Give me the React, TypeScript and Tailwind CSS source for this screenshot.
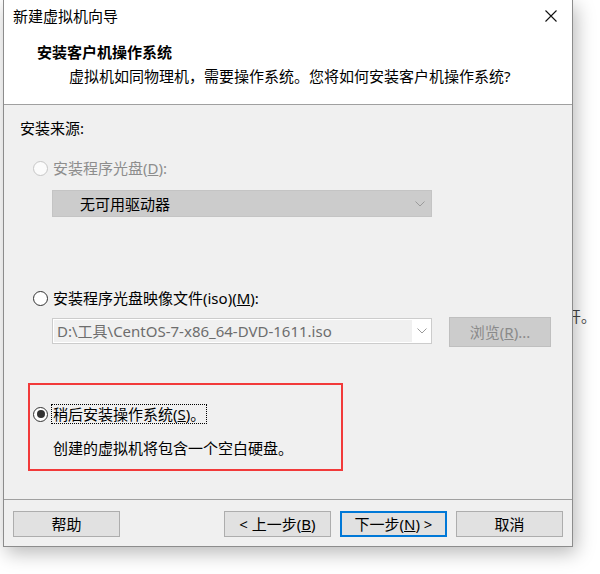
import React from "react";

const FONT = { fontFamily: '"Noto Sans", "Noto Sans CJK SC", sans-serif' };

function Radio({ state }: { state: "disabled" | "off" | "on" }) {
  if (state === "disabled") {
    return <div className="w-[15px] h-[15px] rounded-full border border-[#c6c6c6] bg-[#fbfbfb] shrink-0" />;
  }
  return (
    <div className="w-[15px] h-[15px] rounded-full border border-[#333333] bg-white shrink-0 flex items-center justify-center">
      {state === "on" && <div className="w-[8px] h-[8px] rounded-full bg-[#333333]" />}
    </div>
  );
}

function Chevron({ color = "#8a8a8a" }: { color?: string }) {
  return (
    <svg width="10" height="6" viewBox="0 0 10 6" fill="none">
      <polyline points="0.5,0.5 5,5 9.5,0.5" stroke={color} strokeWidth="1" />
    </svg>
  );
}

function Btn({ children, primary }: { children: React.ReactNode; primary?: boolean }) {
  return (
    <div
      className={`w-[107px] h-[26px] flex items-center justify-center bg-[#e1e1e1] text-[15px] leading-[20px] text-black ${
        primary ? "border-2 border-[#0078d7]" : "border border-[#adadad]"
      }`}
    >
      {children}
    </div>
  );
}

export default function App() {
  return (
    <div className="relative w-[600px] h-[574px] bg-white overflow-hidden" style={FONT}>
      {/* text of the window underneath */}
      <div className="absolute left-[566px] top-[306px] text-[15px] leading-[20px] text-[#444]">开。</div>

      <div className="pl-[3px]">
        <div className="relative z-10 w-[570px] h-[547px] flex flex-col bg-[#f0f0f0] border-x border-b border-[#8c8c8c] shadow-[3px_6px_18px_rgba(0,0,0,0.28)]">
          {/* Header */}
          <div className="h-[104px] bg-white pt-[6px] shrink-0">
            <div className="flex items-center justify-between h-[20px] pl-[9px] pr-[15px]">
              <span className="text-[15px] leading-[20px] text-black">新建虚拟机向导</span>
              <svg width="12" height="12" viewBox="0 0 12 12">
                <path d="M0.5 0.5 L11.5 11.5 M11.5 0.5 L0.5 11.5" stroke="#111" strokeWidth="1.1" />
              </svg>
            </div>
            <div className="mt-[16px] pl-[33px] text-[15px] leading-[20px] font-bold text-black">安装客户机操作系统</div>
            <div className="mt-[4px] pl-[65px] text-[15px] leading-[20px] text-black">
              虚拟机如同物理机，需要操作系统。您将如何安装客户机操作系统?
            </div>
          </div>
          <div className="h-px bg-[#a0a0a0] shrink-0" />

          {/* Content */}
          <div className="h-[394px] shrink-0 flex flex-col text-[15px] leading-[20px] text-black">
            <div className="mt-[13px] pl-[16px]">安装来源:</div>

            <div className="mt-[20px] pl-[29px] flex items-center gap-[5px] h-[20px]">
              <Radio state="disabled" />
              <span className="text-[#8d8d8d]">
                安装程序光盘(<span className="underline">D</span>):
              </span>
            </div>
            <div className="mt-[12px] ml-[48px] w-[380px] h-[27px] bg-[#cccccc] border border-[#c4c4c4] flex items-center justify-between pl-[27px] pr-[6px]">
              <span>无可用驱动器</span>
              <Chevron color="#9a9a9a" />
            </div>

            <div className="mt-[71px] pl-[29px] flex items-center gap-[5px] h-[20px]">
              <Radio state="off" />
              <span>
                安装程序光盘映像文件(iso)(<span className="underline">M</span>):
              </span>
            </div>
            <div className="mt-[9px] flex items-start">
              <div className="mt-[1px] ml-[48px] w-[380px] h-[26px] bg-white border border-[#cccccc] flex items-stretch">
                <div className="w-[358px] bg-[#f0f0f0] m-[1px] mr-0 flex items-center pl-[3px] text-[#6d6d6d]">
                  D:\工具\CentOS-7-x86_64-DVD-1611.iso
                </div>
                <div className="flex-1 flex items-center justify-center">
                  <Chevron color="#9a9a9a" />
                </div>
              </div>
              <div className="ml-[17px] w-[102px] h-[30px] bg-[#cccccc] border border-[#bfbfbf] flex items-center justify-center text-[#8a8a8a]">
                浏览(<span className="underline">R</span>)...
              </div>
            </div>

            <div className="mt-[36px] ml-[24px] w-[315px] h-[88px] border-2 border-[#f23a3a] pt-[19px]">
              <div className="flex items-center h-[20px] pl-[3px]">
                <Radio state="on" />
                <div className="ml-[3px] h-[20px] border border-dotted border-black flex items-center px-[1px] leading-[18px]">
                  稍后安装操作系统(<span className="underline">S</span>)。
                </div>
              </div>
              <div className="mt-[14px] pl-[23px]">创建的虚拟机将包含一个空白硬盘。</div>
            </div>
          </div>

          {/* Footer */}
          <div className="h-px bg-[#a0a0a0] shrink-0" />
          <div className="flex items-start justify-between pt-[11px] pl-[9px] pr-[9px]">
            <Btn>帮助</Btn>
            <div className="flex gap-[9px]">
              <Btn>
                &lt; 上一步(<span className="underline">B</span>)
              </Btn>
              <Btn primary>
                下一步(<span className="underline">N</span>) &gt;
              </Btn>
              <Btn>取消</Btn>
            </div>
          </div>
        </div>
      </div>
    </div>
  );
}
